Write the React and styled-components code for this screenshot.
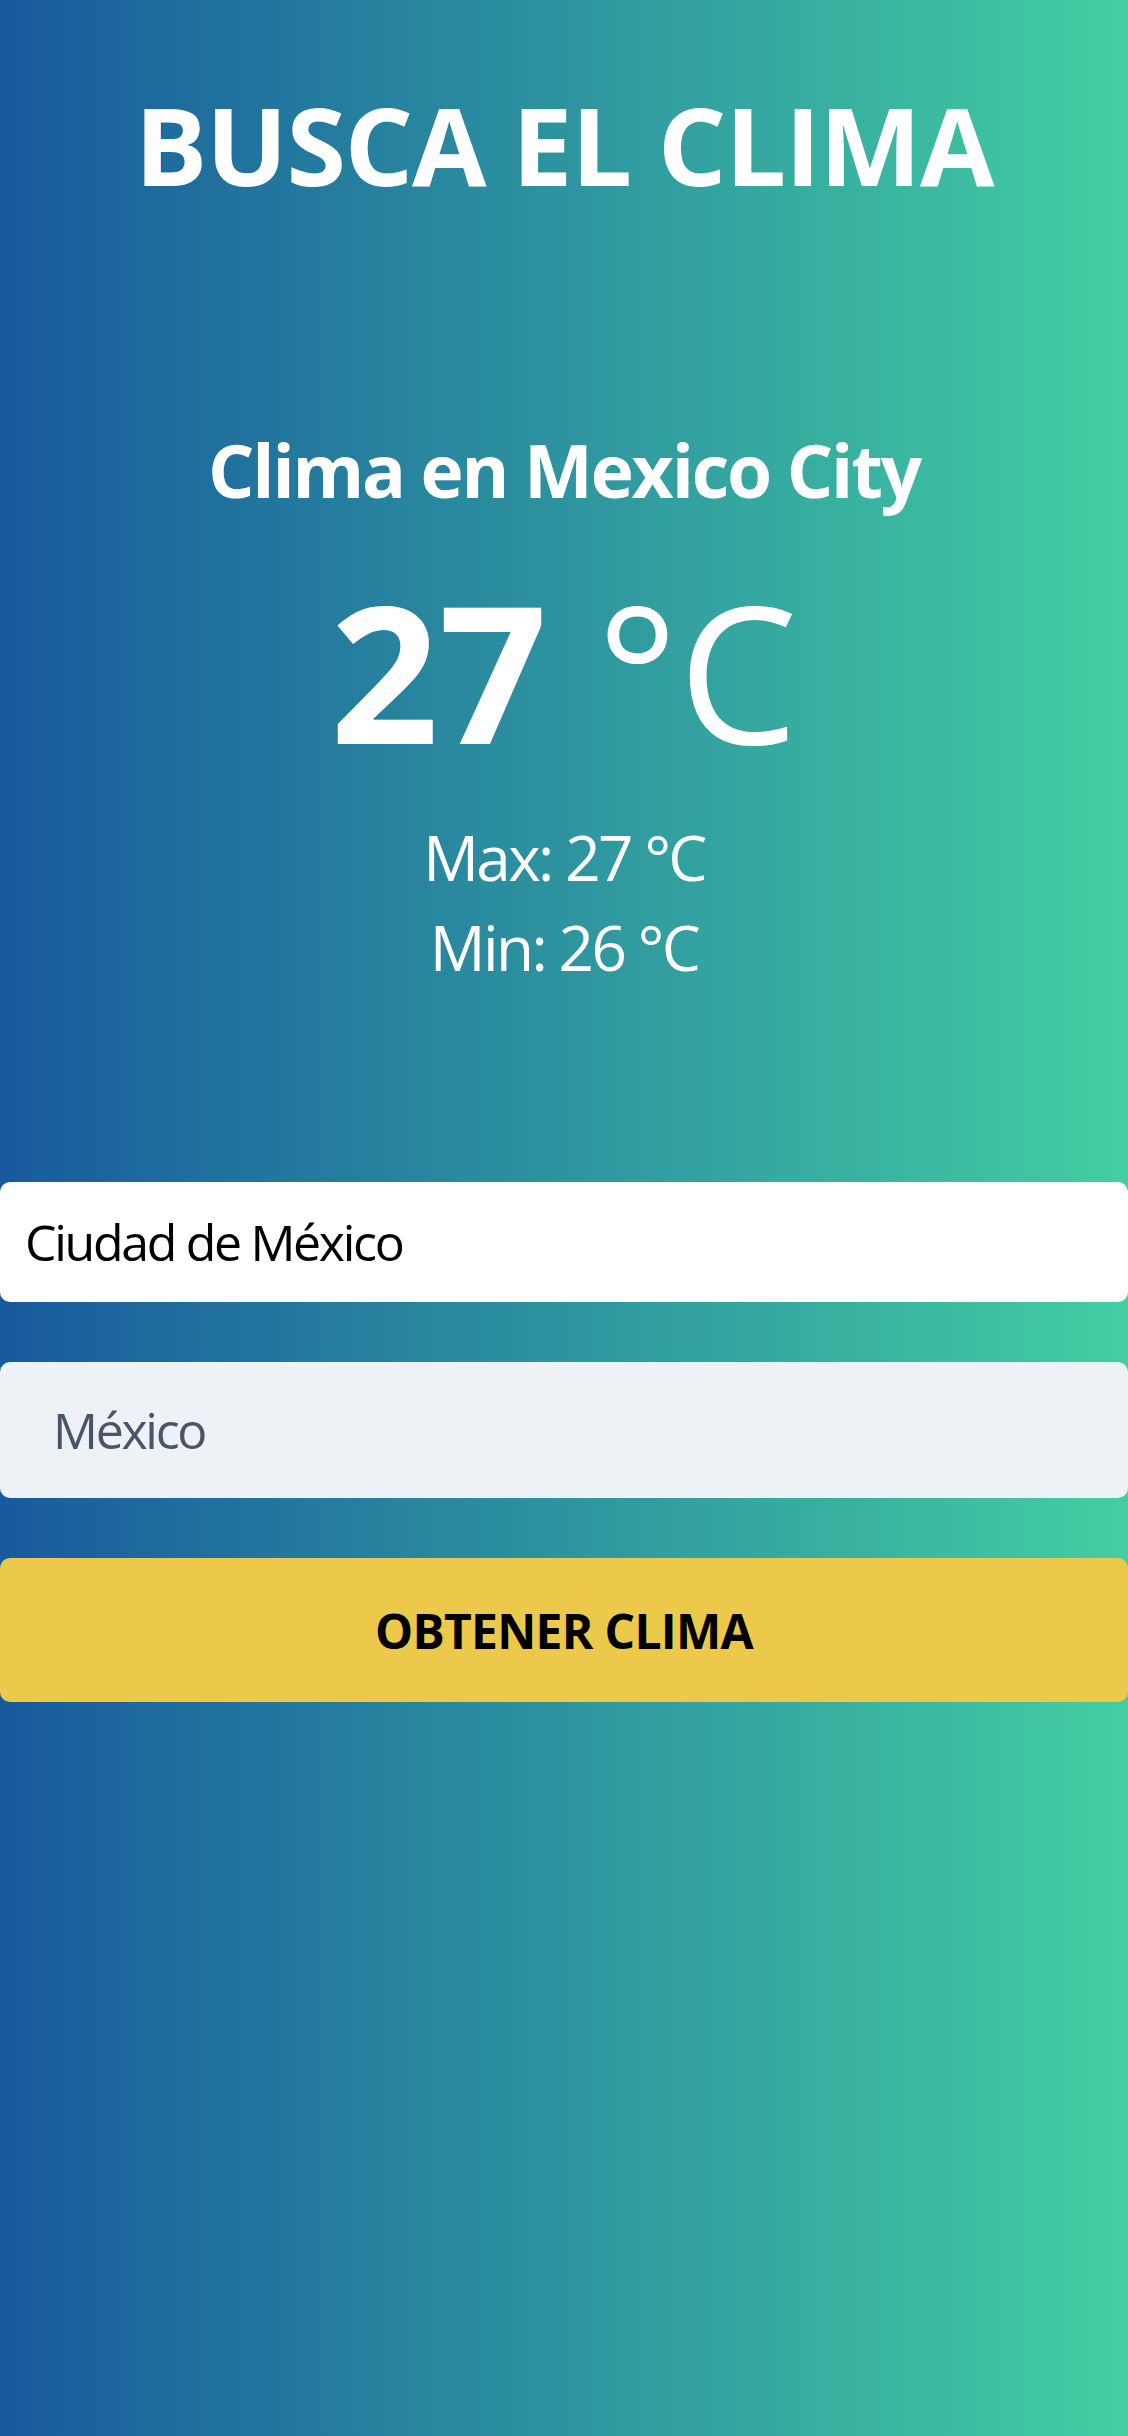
import React from 'react';
import styled, { createGlobalStyle } from 'styled-components';

const GlobalStyle = createGlobalStyle`
  html, body {
    margin: 0;
    padding: 0;
  }
  body {
    font-family: "Open Sans", "Noto Sans", sans-serif;
  }
  * {
    box-sizing: border-box;
  }
`;

const Page = styled.main`
  min-height: 100vh;
  background: linear-gradient(to right, #185a9d, #43cea2);
  color: #fff;
  display: flex;
  flex-direction: column;
  align-items: stretch;
  padding-top: 91px;
`;

const Title = styled.h1`
  margin: 0;
  font-size: 108px;
  line-height: 1;
  font-weight: 700;
  text-align: center;
  letter-spacing: -1.3px;
`;

const Result = styled.section`
  margin-top: 234px;
  display: flex;
  flex-direction: column;
  align-items: center;
`;

const City = styled.h2`
  margin: 0;
  font-size: 73px;
  line-height: 1;
  font-weight: 700;
  letter-spacing: -2.2px;
`;

const Temp = styled.p`
  margin: 70px 0 0;
  font-size: 190px;
  line-height: 1;
  font-weight: 400;
`;

const Bold = styled.span`
  font-weight: 700;
`;

const Range = styled.div`
  margin-top: 46px;
  display: flex;
  flex-direction: column;
  align-items: center;
`;

const RangeLine = styled.p`
  margin: 0;
  font-size: 62px;
  line-height: 90px;
  font-weight: 400;
  letter-spacing: -2.6px;
`;

const Form = styled.form`
  margin-top: 190px;
  display: flex;
  flex-direction: column;
  gap: 60px;
`;

const Input = styled.input`
  display: block;
  width: 100%;
  height: ${props => props.$h}px;
  padding: 0 0 0 ${props => props.$pad}px;
  border: none;
  outline: none;
  border-radius: 10px;
  background: ${props => props.$bg};
  color: #000;
  font-family: "Open Sans", "Noto Sans", sans-serif;
  font-size: 50px;
  letter-spacing: -2.3px;

  &::placeholder {
    color: #4a5568;
    opacity: 1;
  }
`;

const Button = styled.button`
  display: block;
  width: 100%;
  height: 144px;
  border: none;
  border-radius: 10px;
  background: #ecc94b;
  color: #000;
  font-family: "Open Sans", "Noto Sans", sans-serif;
  font-size: 48px;
  font-weight: 700;
  letter-spacing: -0.7px;
  text-transform: uppercase;
  cursor: pointer;
`;

export default function App() {
  return (
    <>
      <GlobalStyle />
      <Page>
        <Title>BUSCA EL CLIMA</Title>
        <Result>
          <City>Clima en Mexico City</City>
          <Temp><Bold>27</Bold> °C</Temp>
          <Range>
            <RangeLine>Max: 27 °C</RangeLine>
            <RangeLine>Min: 26 °C</RangeLine>
          </Range>
        </Result>
        <Form onSubmit={e => e.preventDefault()}>
          <Input $h={120} $pad={25} $bg="#fff" type="text" defaultValue="Ciudad de México" />
          <Input $h={136} $pad={53} $bg="#edf2f7" type="text" placeholder="México" />
          <Button type="submit">Obtener clima</Button>
        </Form>
      </Page>
    </>
  );
}
